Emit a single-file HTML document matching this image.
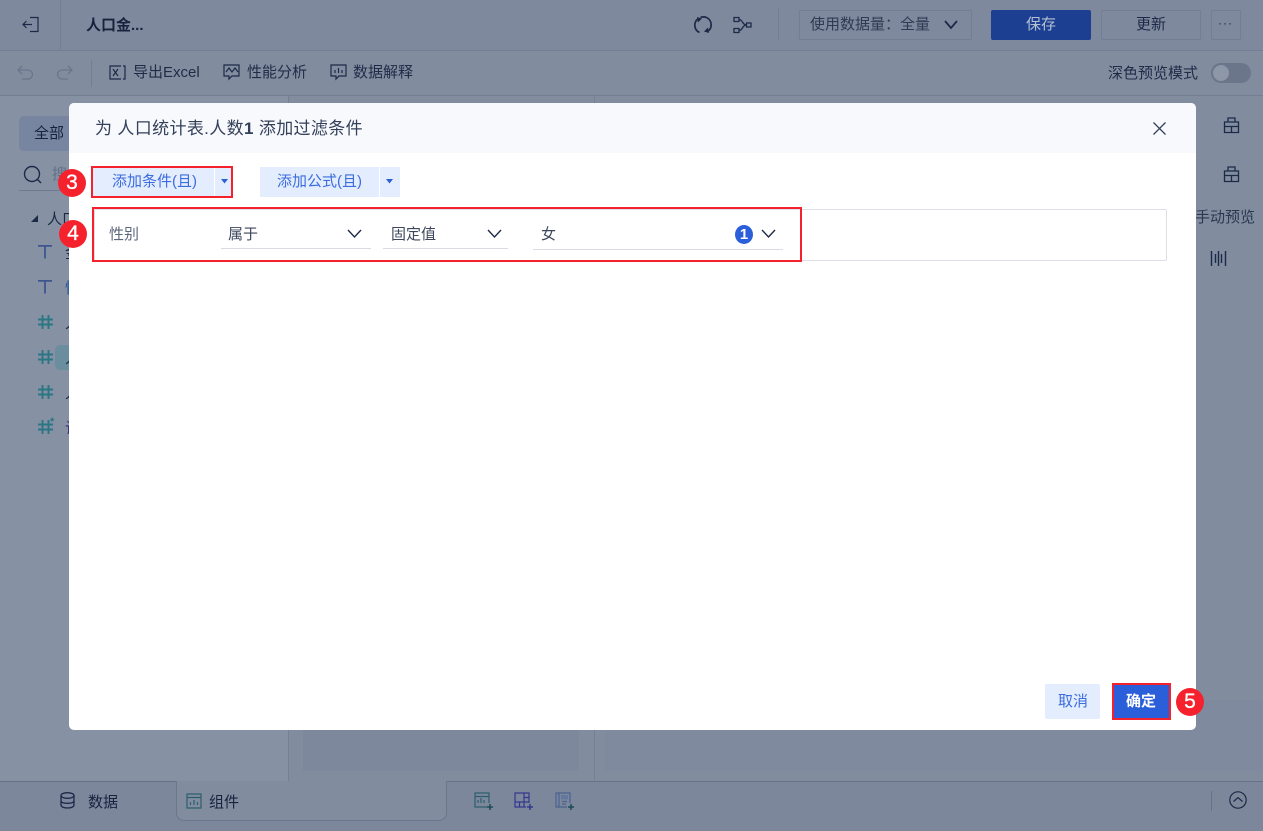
<!DOCTYPE html>
<html lang="zh"><head><meta charset="utf-8"><title>添加过滤条件</title>
<style>
*{box-sizing:border-box}
html,body{margin:0;padding:0}
body{width:1263px;height:831px;position:relative;overflow:hidden;background:#818c9f;font-family:"Liberation Sans","Noto Sans CJK SC",sans-serif;font-size:15px;color:#1c2a47}
.a{position:absolute}
.t{position:absolute;white-space:nowrap;line-height:20px}
svg{position:absolute;overflow:visible;fill:none}
.rb{position:absolute;border:2px solid #f5222d}
.num{position:absolute;width:28px;height:28px;border-radius:50%;background:#f5222d;color:#fff;font-size:21px;line-height:28px;text-align:center;-webkit-text-stroke:.3px #fff}
</style></head><body>

<div class="a" style="left:0;top:0;width:1263px;height:51px;background:#7e899d;border-bottom:1px solid #727e93"></div>
<div class="a" style="left:0;top:51px;width:1263px;height:45px;background:#818c9f;border-bottom:1px solid #727e93"></div>
<div class="a" style="left:60px;top:0;width:1px;height:50px;background:#727e93"></div>

<svg style="left:22px;top:16px" width="18" height="18" stroke="#1c2a47" stroke-width="1.200"><path d="M8 1.500H16V15.500H8M1 8.500H10M4.500 5L1 8.500L4.500 12"/></svg>
<div class="t" style="left:86px;top:16px;font-weight:700;color:#17233d">人口金...</div>

<svg style="left:693px;top:15px" width="20" height="20" stroke="#1c2a47" stroke-width="1.700"><path d="M5.500 3.500A8 8 0 0 0 6.500 17.500M14.500 16.500A8 8 0 0 0 13.500 2.500A8 8 0 0 0 7.500 2.500"/><path d="M4 2L9 3.500L5 7.500Z" fill="#1c2a47" stroke="none"/><path d="M16 18L11 16.500L15 12.500Z" fill="#1c2a47" stroke="none"/></svg>
<svg style="left:733px;top:16px" width="20" height="18" stroke="#1c2a47" stroke-width="1.300"><path d="M1 1.500H6V5.500H1ZM1 12.500H6V16.500H1ZM13.500 7H18V11H13.500ZM6 3.500C10 3.500 9 9 13.500 9M6 14.500C10 14.500 9 9 13.500 9"/></svg>
<div class="a" style="left:778px;top:9px;width:1px;height:31px;background:#727e93"></div>

<div class="a" style="left:799px;top:10px;width:173px;height:30px;border:1px solid #727e93;border-radius:2px"></div>
<div class="t" style="left:810px;top:15px;color:#2e3a52">使用数据量：全量</div>
<svg style="left:944px;top:20px" width="14" height="10" stroke="#1c2a47" stroke-width="1.800"><path d="M1 1L7 8L13 1"/></svg>

<div class="a" style="left:991px;top:10px;width:100px;height:30px;background:#1c3f92;border-radius:2px"></div>
<div class="t" style="left:1026px;top:15px;color:#b6c0d2">保存</div>
<div class="a" style="left:1101px;top:10px;width:100px;height:30px;border:1px solid #727e93;border-radius:2px"></div>
<div class="t" style="left:1136px;top:15px;color:#1c2a47">更新</div>
<div class="a" style="left:1211px;top:10px;width:30px;height:30px;border:1px solid #727e93;border-radius:2px"></div>
<div class="t" style="left:1218px;top:13px;color:#1c2a47;font-size:12px;letter-spacing:1px">···</div>

<svg style="left:17px;top:65px" width="17" height="15" stroke="#6a768c" stroke-width="1.300"><path d="M5 1L1 5L5 9M1 5H11A4 4 0 0 1 11 14H5"/></svg>
<svg style="left:56px;top:65px" width="17" height="15" stroke="#6a768c" stroke-width="1.300"><path d="M12 1L16 5L12 9M16 5H6A4 4 0 0 0 6 14H12"/></svg>
<div class="a" style="left:91px;top:60px;width:1px;height:27px;background:#727e93"></div>

<svg style="left:109px;top:65px" width="17" height="15" stroke="#1c2a47" stroke-width="1.200"><path d="M12 1H1V14H12M14 1H16V14H14M4 4L9 11M9 4L4 11"/></svg>
<div class="t" style="left:133px;top:63px;color:#1f2c47">导出Excel</div>
<svg style="left:223px;top:64px" width="17" height="17" stroke="#1c2a47" stroke-width="1.200"><path d="M6 12H1V1H16V12H9L6 15ZM3 8L6 4L9 8L12 4L15 8"/></svg>
<div class="t" style="left:247px;top:63px;color:#1f2c47">性能分析</div>
<svg style="left:330px;top:64px" width="17" height="17" stroke="#1c2a47" stroke-width="1.200"><path d="M6 12H1V1H16V12H9L6 15ZM5 6V9M8.500 4V9M12 6V9"/></svg>
<div class="t" style="left:353px;top:63px;color:#1f2c47">数据解释</div>

<div class="t" style="left:1108px;top:64px;color:#1f2c47">深色预览模式</div>
<div class="a" style="left:1211px;top:63px;width:40px;height:20px;border-radius:10px;background:#6b768b"></div>
<div class="a" style="left:1213px;top:65px;width:16px;height:16px;border-radius:50%;background:#8e97a8"></div>

<!-- panels behind -->
<div class="a" style="left:0;top:96px;width:288px;height:685px;background:#8791a4"></div>
<div class="a" style="left:288px;top:96px;width:1px;height:685px;background:#767f93"></div>
<div class="a" style="left:303px;top:700px;width:276px;height:71px;background:#7d889c"></div>
<div class="a" style="left:594px;top:96px;width:1px;height:685px;background:#767f93"></div>
<div class="a" style="left:605px;top:700px;width:658px;height:71px;background:#7f8a9e"></div>

<div class="a" style="left:19px;top:116px;width:60px;height:35px;background:#7885a0;border-radius:5px"></div>
<div class="t" style="left:34px;top:124px;color:#17233d">全部</div>
<svg style="left:23px;top:165px" width="20" height="20" stroke="#1c2a47" stroke-width="1.400"><circle cx="9" cy="9" r="7.500"/><path d="M14.500 14.500L18 18"/></svg>
<div class="t" style="left:52px;top:165px;color:#626e85">搜</div>
<div class="a" style="left:19px;top:190px;width:60px;height:1px;background:#6e7a90"></div>
<svg style="left:31px;top:215px" width="8" height="8"><path d="M0 7L7 7L7 0Z" fill="#1c2a47"/></svg>
<div class="t" style="left:47px;top:210px;color:#1c2a47">人口</div>

<svg style="left:38px;top:245px" width="14" height="14" stroke="#3f5590" stroke-width="1.800"><path d="M0 .9H14M7 .9V13.500"/></svg>
<svg style="left:38px;top:280px" width="14" height="14" stroke="#3f5590" stroke-width="1.800"><path d="M0 .9H14M7 .9V13.500"/></svg>
<div class="t" style="left:65px;top:244px;color:#1c2a47">金</div>
<div class="t" style="left:65px;top:279px;color:#1c4c9c">性</div>

<svg style="left:38px;top:315px" width="15" height="14" stroke="#2a7683" stroke-width="1.900"><path d="M4.500 0V14M10.500 0V14M0 4.500H15M0 9.500H15"/></svg>
<div class="a" style="left:55px;top:345px;width:30px;height:25px;background:#6b8e9f;border-radius:5px 0 0 5px"></div>
<svg style="left:38px;top:350px" width="15" height="14" stroke="#2a7683" stroke-width="1.900"><path d="M4.500 0V14M10.500 0V14M0 4.500H15M0 9.500H15"/></svg>
<svg style="left:38px;top:385px" width="15" height="14" stroke="#2a7683" stroke-width="1.900"><path d="M4.500 0V14M10.500 0V14M0 4.500H15M0 9.500H15"/></svg>
<svg style="left:38px;top:420px" width="15" height="14" stroke="#2a7683" stroke-width="1.900"><path d="M4.500 0V14M10.500 0V14M0 4.500H15M0 9.500H15"/></svg>
<div class="t" style="left:50px;top:412px;color:#2a7683;font-size:11px;font-weight:700">*</div>
<div class="t" style="left:65px;top:314px;color:#1c2a47">人</div>
<div class="t" style="left:65px;top:349px;color:#1c2a47">人</div>
<div class="t" style="left:65px;top:384px;color:#1c2a47">人</div>
<div class="t" style="left:65px;top:419px;color:#3c2a80">计</div>

<!-- right rail -->
<svg style="left:1222px;top:117px" width="20" height="17" stroke="#1c2a47" stroke-width="1.300"><path d="M2.500 5H16.500V15.500H2.500ZM6 5V1H13V5M2.500 9.500H16.500M9.500 9.500V15.500"/></svg>
<svg style="left:1222px;top:166px" width="20" height="17" stroke="#1c2a47" stroke-width="1.300"><path d="M2.500 5H16.500V15.500H2.500ZM6 5V1H13V5M2.500 9.500H16.500M9.500 9.500V15.500"/></svg>
<div class="t" style="left:1195px;top:208px;color:#2b3850">手动预览</div>
<svg style="left:1210px;top:250px" width="17" height="17" stroke="#1c2a47" stroke-width="1.400"><path d="M1.500 1V16M5.500 4V13M8.500 1V16M11.500 4V13M15.500 1V16"/></svg>

<!-- bottom bar -->
<div class="a" style="left:0;top:781px;width:1263px;height:50px;background:#7c879b;border-top:1px solid #667288"></div>
<div class="a" style="left:176px;top:781px;width:271px;height:40px;background:#818c9f;border:1px solid #6b778d;border-top:none;border-radius:0 0 8px 8px"></div>
<svg style="left:60px;top:792px" width="15" height="17" stroke="#1c2a47" stroke-width="1.300"><ellipse cx="7.500" cy="3.500" rx="6.500" ry="2.800"/><path d="M1 3.500V13C1 15 4 16 7.500 16S14 15 14 13V3.500M1 8.500C1 10.500 4 11.300 7.500 11.300S14 10.500 14 8.500"/></svg>
<div class="t" style="left:88px;top:793px;color:#17233d">数据</div>
<svg style="left:186px;top:793px" width="16" height="16" stroke="#2c5f6e" stroke-width="1.200"><path d="M1 1H15V15H1ZM1 4.500H15M4.500 12V9M8 12V7M11.500 12V9"/></svg>
<div class="t" style="left:209px;top:793px;color:#17233d">组件</div>
<svg style="left:474px;top:792px" width="20" height="19" stroke="#2c5f6e" stroke-width="1.200"><path d="M13 15H1V1H15V11M1 4.500H15M4 11V8M7 11V6M10 11V8"/><path d="M16 12V18M13 15H19" stroke="#1c4a5a" stroke-width="1.500"/></svg>
<svg style="left:514px;top:792px" width="20" height="19" stroke="#33388f" stroke-width="1.200"><path d="M12 15H1V1H15V11M1 10H15M10 1V15M10 5.500H15M5.500 10V15"/><path d="M16 12V18M13 15H19" stroke="#33388f" stroke-width="1.500"/></svg>
<svg style="left:555px;top:792px" width="20" height="19" stroke="#4a6291" stroke-width="1.200"><path d="M12 15H1V1H15V11M4 1V15M7 9.500H12M7 12H11"/><rect x="6" y="3" width="7" height="4.500" fill="#63789f" stroke="none"/><path d="M16 12V18M13 15H19" stroke="#1c4a5a" stroke-width="1.500"/></svg>
<div class="a" style="left:1211px;top:791px;width:1px;height:20px;background:#667288"></div>
<svg style="left:1229px;top:791px" width="18" height="18" stroke="#1c2a47" stroke-width="1.200"><circle cx="9" cy="9" r="8.200"/><path d="M4.500 10.500L9 6.500L13.500 10.500"/></svg>

<!-- dialog -->
<div class="a" style="left:69px;top:103px;width:1127px;height:627px;background:#fff;border-radius:5px;overflow:hidden">
  <div class="a" style="left:0;top:0;width:1127px;height:50px;background:#f8f9fd"></div>
</div>
<div class="t" style="left:95px;top:119px;font-size:17px;color:#33405a;letter-spacing:.35px">为 人口统计表.人数<b>1</b> 添加过滤条件</div>
<svg style="left:1153px;top:122px" width="13" height="13" stroke="#33405a" stroke-width="1.300"><path d="M.5 .5L12.500 12.500M12.500 .5L.5 12.500"/></svg>

<!-- add buttons -->
<div class="a" style="left:93px;top:168px;width:121px;height:29px;background:#e3edfd"></div>
<div class="a" style="left:215px;top:168px;width:17px;height:29px;background:#e3edfd"></div>
<div class="t" style="left:112px;top:172px;color:#3b6ce0">添加条件(且)</div>
<svg style="left:221px;top:179px" width="8" height="6"><path d="M0 0H7L3.500 4.500Z" fill="#2b5fd9"/></svg>

<div class="a" style="left:260px;top:167px;width:119px;height:30px;background:#e3edfd"></div>
<div class="a" style="left:380px;top:167px;width:20px;height:30px;background:#e3edfd"></div>
<div class="t" style="left:277px;top:172px;color:#3b6ce0">添加公式(且)</div>
<svg style="left:386px;top:179px" width="8" height="6"><path d="M0 0H7L3.500 4.500Z" fill="#2b5fd9"/></svg>

<!-- condition row -->
<div class="a" style="left:94px;top:209px;width:1073px;height:52px;border:1px solid #dcdfe6;border-radius:2px"></div>
<div class="t" style="left:109px;top:225px;color:#5c677c">性别</div>
<div class="t" style="left:228px;top:225px;color:#3c475d">属于</div>
<svg style="left:347px;top:229px" width="15" height="10" stroke="#1f2c47" stroke-width="1.400"><path d="M1 1L7.500 8L14 1"/></svg>
<div class="a" style="left:221px;top:248px;width:150px;height:1px;background:#d8dbe1"></div>
<div class="t" style="left:391px;top:225px;color:#3c475d">固定值</div>
<svg style="left:487px;top:229px" width="15" height="10" stroke="#1f2c47" stroke-width="1.400"><path d="M1 1L7.500 8L14 1"/></svg>
<div class="a" style="left:383px;top:248px;width:125px;height:1px;background:#d8dbe1"></div>
<div class="t" style="left:541px;top:225px;color:#3c475d">女</div>
<div class="a" style="left:735px;top:225px;width:18px;height:19px;border-radius:50%;background:#2b5fd9;color:#fff;font-size:15px;font-weight:700;line-height:19px;text-align:center">1</div>
<svg style="left:761px;top:229px" width="15" height="10" stroke="#1f2c47" stroke-width="1.400"><path d="M1 1L7.500 8L14 1"/></svg>
<div class="a" style="left:533px;top:249px;width:250px;height:1px;background:#d8dbe1"></div>

<!-- footer buttons -->
<div class="a" style="left:1045px;top:684px;width:55px;height:35px;background:#e3edfd;border-radius:2px"></div>
<div class="t" style="left:1058px;top:692px;color:#3b6ce0">取消</div>
<div class="a" style="left:1113px;top:685px;width:57px;height:34px;background:#2b5fd9"></div>
<div class="t" style="left:1126px;top:692px;color:#fff;font-weight:700">确定</div>

<!-- red annotations -->
<div class="rb" style="left:91px;top:166px;width:142px;height:32px"></div>
<div class="rb" style="left:92px;top:207px;width:710px;height:55px"></div>
<div class="rb" style="left:1112px;top:683px;width:59px;height:37px"></div>
<div class="num" style="left:58px;top:169px">3</div>
<div class="num" style="left:59px;top:220px">4</div>
<div class="num" style="left:1176px;top:688px">5</div>

</body></html>
